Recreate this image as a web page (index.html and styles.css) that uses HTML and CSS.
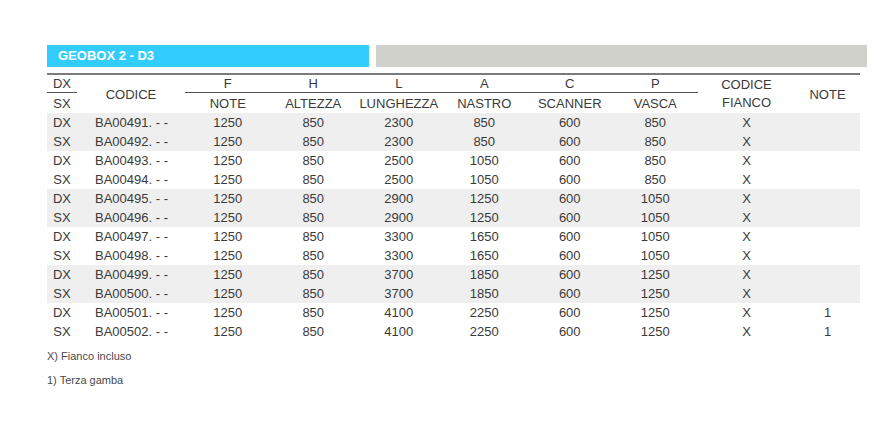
FILE: index.html
```html
<!DOCTYPE html>
<html lang="it">
<head>
<meta charset="utf-8">
<title>GEOBOX 2 - D3</title>
<link rel="stylesheet" href="styles.css">
</head>
<body>
<div class="page">
  <div class="titlebar">
    <div class="title">GEOBOX 2 - D3</div>
    <div class="fill"></div>
  </div>
  <table class="spec">
    <colgroup>
      <col class="c-side"><col class="c-code">
      <col class="c-num"><col class="c-num"><col class="c-num"><col class="c-num"><col class="c-num"><col class="c-num">
      <col class="c-fianco"><col class="c-note">
    </colgroup>
    <thead>
      <tr class="h1">
        <th class="ul">DX</th>
        <th rowspan="2">CODICE</th>
        <th class="ul">F</th>
        <th class="ul">H</th>
        <th class="ul">L</th>
        <th class="ul">A</th>
        <th class="ul">C</th>
        <th class="ul">P</th>
        <th rowspan="2" class="two">CODICE<br>FIANCO</th>
        <th rowspan="2">NOTE</th>
      </tr>
      <tr class="h2">
        <th>SX</th>
        <th>NOTE</th>
        <th>ALTEZZA</th>
        <th>LUNGHEZZA</th>
        <th>NASTRO</th>
        <th>SCANNER</th>
        <th>VASCA</th>
      </tr>
    </thead>
    <tbody>
      <tr class="shade"><td>DX</td><td class="code">BA00491. - -</td><td>1250</td><td>850</td><td>2300</td><td>850</td><td>600</td><td>850</td><td>X</td><td></td></tr>
      <tr class="shade"><td>SX</td><td class="code">BA00492. - -</td><td>1250</td><td>850</td><td>2300</td><td>850</td><td>600</td><td>850</td><td>X</td><td></td></tr>
      <tr><td>DX</td><td class="code">BA00493. - -</td><td>1250</td><td>850</td><td>2500</td><td>1050</td><td>600</td><td>850</td><td>X</td><td></td></tr>
      <tr><td>SX</td><td class="code">BA00494. - -</td><td>1250</td><td>850</td><td>2500</td><td>1050</td><td>600</td><td>850</td><td>X</td><td></td></tr>
      <tr class="shade"><td>DX</td><td class="code">BA00495. - -</td><td>1250</td><td>850</td><td>2900</td><td>1250</td><td>600</td><td>1050</td><td>X</td><td></td></tr>
      <tr class="shade"><td>SX</td><td class="code">BA00496. - -</td><td>1250</td><td>850</td><td>2900</td><td>1250</td><td>600</td><td>1050</td><td>X</td><td></td></tr>
      <tr><td>DX</td><td class="code">BA00497. - -</td><td>1250</td><td>850</td><td>3300</td><td>1650</td><td>600</td><td>1050</td><td>X</td><td></td></tr>
      <tr><td>SX</td><td class="code">BA00498. - -</td><td>1250</td><td>850</td><td>3300</td><td>1650</td><td>600</td><td>1050</td><td>X</td><td></td></tr>
      <tr class="shade"><td>DX</td><td class="code">BA00499. - -</td><td>1250</td><td>850</td><td>3700</td><td>1850</td><td>600</td><td>1250</td><td>X</td><td></td></tr>
      <tr class="shade"><td>SX</td><td class="code">BA00500. - -</td><td>1250</td><td>850</td><td>3700</td><td>1850</td><td>600</td><td>1250</td><td>X</td><td></td></tr>
      <tr><td>DX</td><td class="code">BA00501. - -</td><td>1250</td><td>850</td><td>4100</td><td>2250</td><td>600</td><td>1250</td><td>X</td><td>1</td></tr>
      <tr><td>SX</td><td class="code">BA00502. - -</td><td>1250</td><td>850</td><td>4100</td><td>2250</td><td>600</td><td>1250</td><td>X</td><td>1</td></tr>
    </tbody>
  </table>
  <p class="foot first">X) Fianco incluso</p>
  <p class="foot">1) Terza gamba</p>
</div>
</body>
</html>
```
FILE: styles.css
```css
html, body {
  margin: 0;
  padding: 0;
  background: #ffffff;
}
body {
  font-family: "Liberation Sans", Arial, Helvetica, sans-serif;
  color: #3a3a3a;
}
.page {
  padding: 45px 0 0 47px;
}
.titlebar {
  display: flex;
  gap: 7px;
  width: 820px;
  height: 22px;
}
.title {
  width: 322px;
  flex: none;
  background: #33ccff;
  color: #ffffff;
  font-weight: bold;
  font-size: 13px;
  line-height: 22px;
  padding-left: 11px;
  box-sizing: border-box;
}
.fill {
  flex: 1;
  background: #d1d1cb;
}
.spec {
  margin-top: 6px;
  width: 813px;
  table-layout: fixed;
  border-collapse: collapse;
  border-top: 2px solid #7b7b7b;
  font-size: 13px;
}
.c-side { width: 30px; }
.c-code { width: 108px; }
.c-num { width: 85.5px; }
.c-fianco { width: 97px; }
.c-note { width: 65px; }
.spec th {
  font-weight: normal;
  padding: 0;
  text-align: center;
  vertical-align: middle;
  white-space: nowrap;
}
.spec th.two {
  line-height: 18px;
}
.h1 th {
  height: 17px;
}
.h1 th.ul {
  border-bottom: 1px solid #555555;
}
.h2 th {
  height: 20px;
}
.spec td {
  height: 19px;
  padding: 0;
  text-align: center;
  vertical-align: middle;
  white-space: nowrap;
}
.spec td.code {
  text-align: left;
  padding-left: 18px;
}
.spec tr.shade td {
  background: #efefef;
}
.foot {
  margin: 0;
  font-size: 11px;
  color: #4a4a4a;
  line-height: 14px;
}
.foot.first {
  margin-top: 8px;
  margin-bottom: 10px;
}
```
